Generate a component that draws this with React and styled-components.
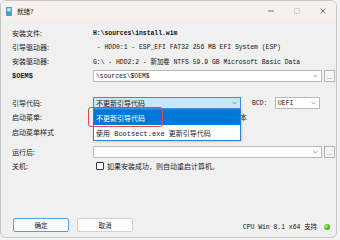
import React from 'react';
import styled, { createGlobalStyle } from 'styled-components';

const GlobalStyle = createGlobalStyle`
  html, body { margin: 0; padding: 0; background: #f3f3f3; }
  body {
    width: 340px; height: 240px; overflow: hidden;
    font-family: "Noto Sans CJK SC", "Noto Sans", sans-serif;
    color: #1b1b1b;
  }
`;

const Window = styled.div`
  width: 337px;
  height: 238px;
  box-sizing: border-box;
  border: 1px solid #c6c6c6;
  border-radius: 6px;
  overflow: hidden;
  background: #f0f0f0;
  display: flex;
  flex-direction: column;
`;

const TitleBar = styled.div`
  height: 20px;
  flex-shrink: 0;
  background: #f8f0ee;
  display: flex;
  align-items: center;
  padding-left: 5px;
`;

const Title = styled.span`
  font-size: 6.6px;
  margin-left: 5px;
  color: #222;
`;

const Controls = styled.div`
  margin-left: auto;
  display: flex;
  align-items: center;
  height: 100%;
`;

const CtrlBtn = styled.div`
  width: 26px;
  height: 100%;
  display: flex;
  align-items: center;
  justify-content: center;
`;

const Form = styled.div`
  display: flex;
  flex-direction: column;
  padding: 5px 1px 0 11px;
`;

const Row = styled.div`
  display: flex;
  align-items: center;
  height: ${p => p.$h || 14}px;
  margin-top: ${p => p.$mt || 0}px;
`;

const Label = styled.div`
  width: 81px;
  flex-shrink: 0;
  font-size: 7px;
  white-space: nowrap;
  font-family: ${p => (p.$mono ? '"Liberation Mono", monospace' : '"Noto Sans CJK SC", sans-serif')};
  font-weight: ${p => (p.$mono ? 700 : 400)};
`;

const Value = styled.div`
  font-family: "Liberation Mono", "Noto Sans CJK SC", monospace;
  font-size: 6.4px;
  white-space: pre;
  color: #111;
  font-weight: ${p => (p.$bold ? 700 : 400)};
`;

const Field = styled.div`
  flex: ${p => (p.$w ? `0 0 ${p.$w}px` : 1)};
  height: 12px;
  box-sizing: border-box;
  border: 1px solid ${p => (p.$active ? '#3d8ee0' : '#b9b9b9')};
  background: ${p => (p.$active ? '#cce4f7' : '#ffffff')};
  display: flex;
  align-items: center;
  padding-left: 2px;
  position: relative;
  font-size: 7px;
  white-space: nowrap;
`;

const Chevron = styled.svg`
  position: absolute;
  right: 3px;
  top: 50%;
  margin-top: -2px;
`;

const Dots = styled.div`
  width: 11px;
  height: 12px;
  margin-left: 2px;
  box-sizing: border-box;
  border: 1px solid #b5b5b5;
  background: #f4f4f4;
  font-size: 6px;
  font-family: "Liberation Sans", sans-serif;
  display: flex;
  align-items: flex-end;
  justify-content: center;
  line-height: 8px;
`;

const SubLabel = styled.div`
  font-size: 6.4px;
  font-family: "Liberation Mono", monospace;
  margin-left: 11px;
  width: 23px;
`;

const Dropdown = styled.div`
  position: absolute;
  left: -1px;
  top: 11px;
  width: 148px;
  height: 32px;
  box-sizing: border-box;
  border: 1px solid #2f7fd0;
  background: #fff;
  z-index: 2;
  display: flex;
  flex-direction: column;
  box-shadow: 1px 1px 2px rgba(0, 0, 0, 0.15);
`;

const Item = styled.div`
  height: 15px;
  display: flex;
  align-items: center;
  padding-left: 2px;
  font-size: 7px;
  white-space: pre;
  font-family: "Liberation Mono", "Noto Sans CJK SC", monospace;
  background: ${p => (p.$sel ? '#0078d7' : 'transparent')};
  color: ${p => (p.$sel ? '#ffffff' : '#1b1b1b')};
`;

const Mark = styled.div`
  position: absolute;
  left: -6px;
  top: 9px;
  width: 75px;
  height: 20px;
  box-sizing: border-box;
  border: 1.6px solid #e4464f;
  border-radius: 3px;
  z-index: 3;
`;

const Check = styled.span`
  width: 6px;
  height: 6px;
  border: 1px solid #333;
  border-radius: 1px;
  background: #fff;
  margin: 0 3px 0 3px;
  flex-shrink: 0;
`;

const CheckText = styled.span`
  font-size: 7px;
  white-space: nowrap;
`;

const Footer = styled.div`
  margin-top: auto;
  display: flex;
  align-items: center;
  padding: 0 6px 5px 12px;
`;

const Button = styled.div`
  width: 56px;
  height: 14px;
  box-sizing: border-box;
  border: 1px solid ${p => (p.$primary ? '#5b9ee0' : '#d0d0d0')};
  background: #fdfdfd;
  border-radius: 2px;
  display: flex;
  align-items: center;
  justify-content: center;
  font-size: 6.6px;
  margin-right: 8px;
`;

const Status = styled.div`
  margin-left: auto;
  display: flex;
  align-items: center;
  margin-top: 3px;
`;

const Dot = styled.span`
  width: 6px;
  height: 6px;
  border-radius: 50%;
  margin-left: 7px;
  background: radial-gradient(circle at 35% 35%, #b8f27a 0%, #4cc21c 50%, #2e9110 100%);
`;

const ChevronIcon = () => (
  <Chevron width="5" height="4" viewBox="0 0 5 4">
    <path d="M0.5 1 L2.5 3 L4.5 1" fill="none" stroke="#777" strokeWidth="0.7" />
  </Chevron>
);

export default function App() {
  return (
    <>
      <GlobalStyle />
      <Window>
        <TitleBar>
          <svg width="6" height="9" viewBox="0 0 6 9">
            <rect x="0.3" y="0.3" width="5.4" height="8.4" rx="0.8" fill="#3fa2c9" stroke="#2a6f95" strokeWidth="0.5" />
            <rect x="1.2" y="1.3" width="3.6" height="3" fill="#bfe7f5" />
          </svg>
          <Title>就绪?</Title>
          <Controls>
            <CtrlBtn>
              <svg width="6" height="2" viewBox="0 0 6 2"><line x1="0" y1="1" x2="6" y2="1" stroke="#444" strokeWidth="0.7" /></svg>
            </CtrlBtn>
            <CtrlBtn>
              <svg width="6" height="6" viewBox="0 0 6 6"><rect x="0.5" y="0.5" width="5" height="5" rx="0.8" fill="none" stroke="#c4c4c4" strokeWidth="0.7" /></svg>
            </CtrlBtn>
            <CtrlBtn>
              <svg width="6" height="6" viewBox="0 0 6 6"><path d="M0.5 0.5 L5.5 5.5 M5.5 0.5 L0.5 5.5" stroke="#444" strokeWidth="0.7" /></svg>
            </CtrlBtn>
          </Controls>
        </TitleBar>
        <Form>
          <Row>
            <Label>安装文件:</Label>
            <Value $bold>H:\sources\install.wim</Value>
          </Row>
          <Row>
            <Label>引导驱动器:</Label>
            <Value> - HDD0:1 - ESP_EFI FAT32 256 MB EFI System (ESP)</Value>
          </Row>
          <Row>
            <Label>安装驱动器:</Label>
            <Value>G:\ - HDD2:2 - 新加卷 NTFS 59.9 GB Microsoft Basic Data</Value>
          </Row>
          <Row $mt={1}>
            <Label $mono>$OEM$</Label>
            <Field>
              <Value>\sources\$OEM$</Value>
              <ChevronIcon />
            </Field>
            <Dots>...</Dots>
          </Row>
          <Row $mt={13}>
            <Label>引导代码:</Label>
            <Field $w={148} $active>
              不更新引导代码
              <ChevronIcon />
              <Dropdown>
                <Item $sel>不更新引导代码</Item>
                <Item>使用 Bootsect.exe 更新引导代码</Item>
              </Dropdown>
              <Mark />
            </Field>
            <SubLabel>BCD:</SubLabel>
            <Field $w={45}>
              <Value>UEFI</Value>
              <ChevronIcon />
            </Field>
          </Row>
          <Row>
            <Label>启动菜单:</Label>
            <Check />
            <CheckText>使用旧版启动菜单并在其中显示所有系统版本</CheckText>
          </Row>
          <Row $mt={1}>
            <Label>启动菜单样式</Label>
          </Row>
          <Row $mt={5} $h={15}>
            <Label>运行后:</Label>
            <Field>
              <ChevronIcon />
            </Field>
            <Dots>...</Dots>
          </Row>
          <Row>
            <Label>关机:</Label>
            <Check />
            <CheckText>如果安装成功，则自动重启计算机。</CheckText>
          </Row>
        </Form>
        <Footer>
          <Button $primary>确定</Button>
          <Button>取消</Button>
          <Status>
            <Value>CPU Win 8.1 x64 支持</Value>
            <Dot />
          </Status>
        </Footer>
      </Window>
    </>
  );
}
